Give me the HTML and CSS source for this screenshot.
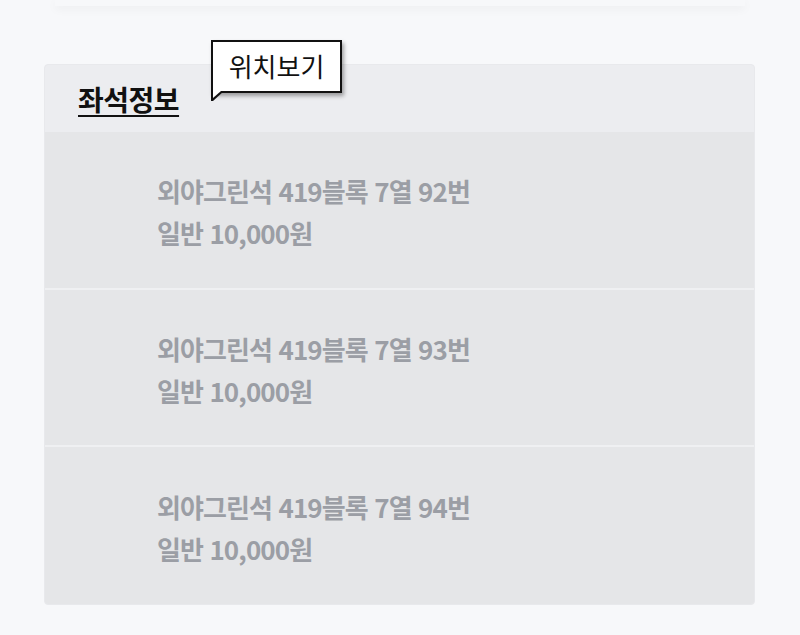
FILE: index.html
```html
<!DOCTYPE html>
<html lang="ko">
<head>
<meta charset="utf-8">
<link rel="stylesheet" href="styles.css">
</head>
<body>
<div class="top-card"></div>
<section class="seat-card">
  <div class="seat-head">
    <h2 class="seat-title">좌석정보</h2>
    <div class="tooltip">위치보기</div>
  </div>
  <div class="seat-row">
    <p class="seat-line">외야그린석 419블록 7열 92번</p>
    <p class="seat-line">일반 10,000원</p>
  </div>
  <div class="seat-row">
    <p class="seat-line">외야그린석 419블록 7열 93번</p>
    <p class="seat-line">일반 10,000원</p>
  </div>
  <div class="seat-row">
    <p class="seat-line">외야그린석 419블록 7열 94번</p>
    <p class="seat-line">일반 10,000원</p>
  </div>
</section>
</body>
</html>
```
FILE: styles.css
```css
* { box-sizing: border-box; }
html, body { margin: 0; padding: 0; }
body {
  background: #f7f8fa;
  font-family: "Noto Sans CJK KR", "Noto Sans", sans-serif;
  width: 800px;
  height: 635px;
  overflow: hidden;
}
.top-card {
  width: 690px;
  height: 6px;
  margin: 0 auto;
  background: #f7f8fa;
  box-shadow: 0 3px 10px rgba(0, 0, 0, 0.05);
}
.seat-card {
  position: relative;
  width: 711px;
  margin: 58px 0 0 44px;
  border: 1px solid #e8e9ec;
  border-radius: 4px;
  background: #ecedf0;
}
.seat-head {
  height: 67px;
  padding-left: 33px;
  display: flex;
  align-items: center;
}
.seat-title {
  margin: 0;
  font-size: 28px;
  font-weight: 700;
  letter-spacing: -0.5px;
  color: #111;
  text-decoration: underline;
  text-decoration-thickness: 2px;
  text-underline-offset: 4px;
  line-height: 1;
}
.tooltip {
  position: absolute;
  left: 166px;
  top: -25px;
  width: 131px;
  height: 53px;
  background: #fff;
  border: 2px solid #111;
  box-shadow: 2px 3px 4px rgba(0, 0, 0, 0.35);
  font-size: 26px;
  font-weight: 400;
  letter-spacing: 0;
  color: #111;
  display: flex;
  align-items: center;
  justify-content: center;
  padding-bottom: 3px;
}
.tooltip::before {
  content: "";
  position: absolute;
  left: -2px;
  bottom: -10px;
  width: 0;
  height: 0;
  border-left: 2px solid #111;
  border-top: 10px solid #111;
  border-right: 11px solid transparent;
}
.tooltip::after {
  content: "";
  position: absolute;
  left: 0;
  bottom: -7px;
  width: 0;
  height: 0;
  border-top: 7px solid #fff;
  border-right: 8px solid transparent;
}
.seat-row {
  height: 157px;
  background: #e5e6e8;
  border-top: 2px solid #eff0f2;
  padding-left: 112px;
  display: flex;
  flex-direction: column;
  justify-content: center;
  padding-top: 4px;
}
.seat-head + .seat-row { border-top: none; height: 156px; }
.seat-row:last-child { border-radius: 0 0 3px 3px; height: 159px; }
.seat-line {
  margin: 0;
  font-size: 26px;
  font-weight: 700;
  letter-spacing: -0.9px;
  line-height: 42px;
  color: #9b9ea5;
}
```
